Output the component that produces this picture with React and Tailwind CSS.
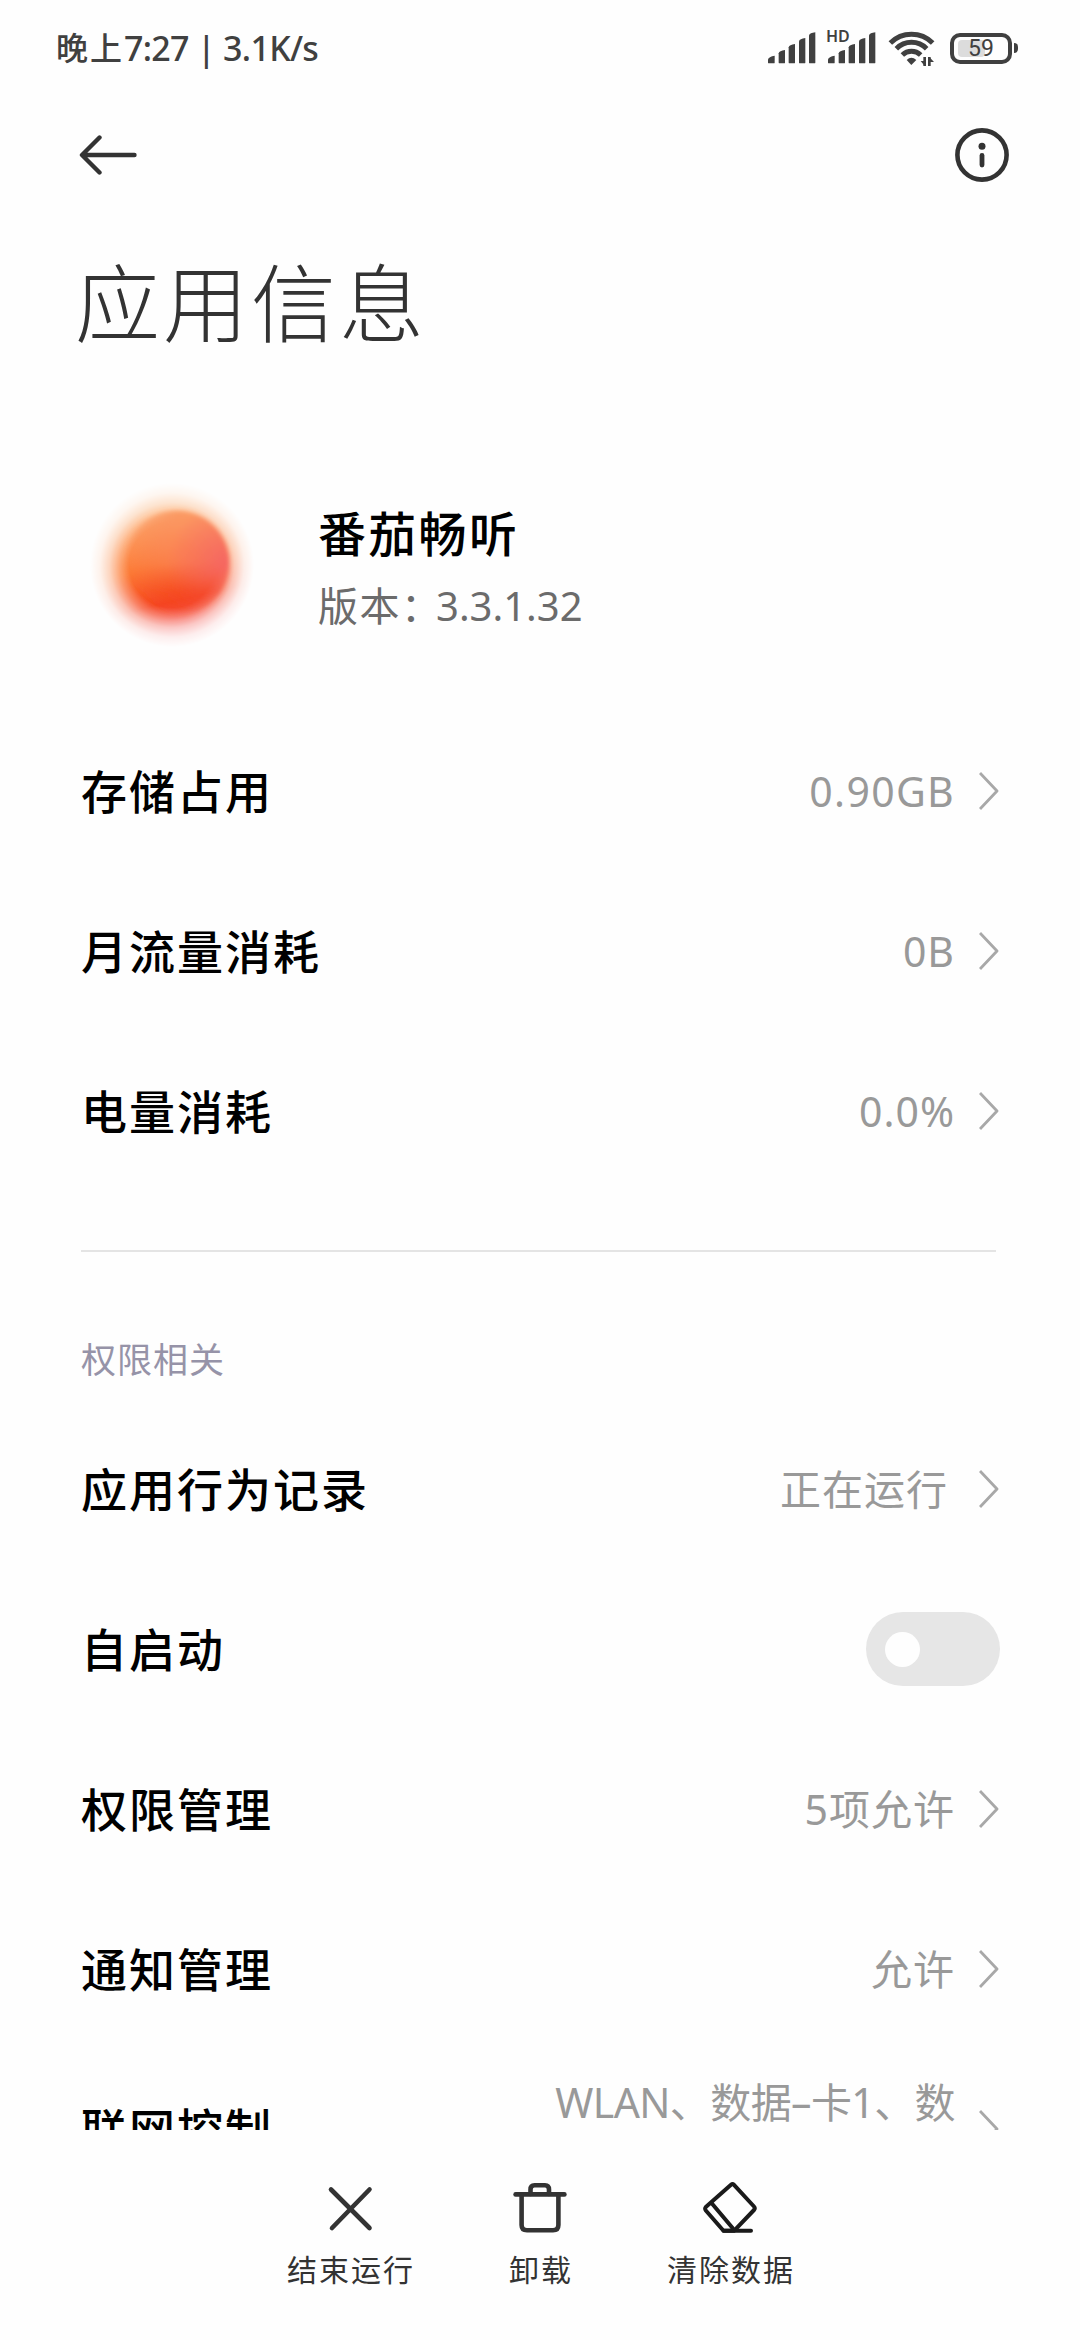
import React, { useState } from 'react';

// Barras de señal de la tarjeta SIM
const IconSignal = () => (
  <svg className="w-12 h-8" viewBox="0 0 144 96" fill="#404040">
    <path d="M0 92V82Q2 74 20 71V92Q20 94 17 94H3Q0 94 0 92Z" />
    <path d="M32 92V64Q34 56 51 54V92Q51 94 48 94H35Q32 94 32 92Z" />
    <path d="M62 92V46Q64 38 81 36V92Q81 94 78 94H65Q62 94 62 92Z" />
    <path d="M93 92V28Q95 20 112 18V92Q112 94 109 94H96Q93 94 93 92Z" />
    <path d="M123 92V10Q125 3 142 1V92Q142 94 139 94H126Q123 94 123 92Z" />
  </svg>
);

const IconWifi = () => (
  <svg className="w-[47px] h-[35px]" viewBox="442 60 141 105" fill="none" stroke="#404040">
    <path d="M449 96A90 90 0 0 1 576 96" strokeWidth="15" />
    <path d="M467 113A64 64 0 0 1 558 113" strokeWidth="15" />
    <path d="M485 132A40 40 0 0 1 540 132" strokeWidth="15" />
    <path d="M498 147Q512 134 527 147L512 162Z" fill="#404040" stroke="none" />
    <path d="M552 138V165M566 165V138" strokeWidth="8" />
    <path d="M540 150L552 165V150ZM566 138L580 153H566Z" fill="#404040" stroke="none" />
  </svg>
);

const IconBack = () => (
  <svg className="w-[58px] h-10" viewBox="0 0 58 40" fill="none" stroke="#333" strokeWidth="4.4" strokeLinecap="round" strokeLinejoin="round">
    <path d="M20.500 2.500L3 20L20.500 37.500M4 20H55.500" />
  </svg>
);

const IconInfo = () => (
  <svg className="w-[54px] h-[54px]" viewBox="0 0 54 54" fill="none" stroke="#333">
    <circle cx="27" cy="27" r="24.600" strokeWidth="4.600" />
    <circle cx="27" cy="18.200" r="3.500" fill="#333" stroke="none" />
    <path d="M27 27.500V37" strokeWidth="4.800" strokeLinecap="round" />
  </svg>
);

const IconChevron = () => (
  <svg className="w-5 h-[38px] shrink-0" viewBox="0 0 20 38" fill="none" stroke="#a8a8a8" strokeWidth="2.800" strokeLinejoin="round">
    <path d="M1 1L18 19L1 37" />
  </svg>
);

const IconClose = () => (
  <svg className="w-[52px] h-[52px]" viewBox="0 0 52 52" fill="none" stroke="#333" strokeWidth="4.600" strokeLinecap="round">
    <path d="M7 7.500L45.500 46M45.500 7.500L8 46" />
  </svg>
);

const IconTrash = () => (
  <svg className="w-[54px] h-[52px]" viewBox="0 0 54 52" fill="none" stroke="#333" strokeWidth="4.600" strokeLinecap="round" strokeLinejoin="round">
    <path d="M2.600 12.400H51.400" />
    <path d="M17.500 12V7.500Q17.500 3.200 21.500 3.200H32Q36 3.200 36 7.500V12" />
    <path d="M8.600 13V43Q8.600 48.300 14 48.300H40Q45.400 48.300 45.400 43V13" />
  </svg>
);

const IconEraser = () => (
  <svg className="w-[54px] h-[52px]" viewBox="0 0 54 52" fill="none" stroke="#1a1a1a" strokeWidth="4" strokeLinecap="round" strokeLinejoin="round">
    <path d="M28 2.800Q29.500 1.500 31 2.800L51 24.500Q52.500 26.200 51 28L31 48.800H20.500L2.800 28.500Q1.500 26.500 2.800 25Z" />
    <path d="M8.500 21L30 46.500M20.500 48.800H48" />
  </svg>
);

// Logo difuminado de la aplicación
const AppLogo = () => (
  <svg className="w-[176px] h-[176px]" viewBox="0 0 176 176">
    <defs>
      <radialGradient id="halo" cx="0.5" cy="0.5" r="0.5">
        <stop offset="0.52" stopColor="#fff" stopOpacity="1" />
        <stop offset="0.64" stopColor="#fff" stopOpacity="0.7" />
        <stop offset="0.76" stopColor="#fff" stopOpacity="0.33" />
        <stop offset="0.88" stopColor="#fff" stopOpacity="0.1" />
        <stop offset="1" stopColor="#fff" stopOpacity="0" />
      </radialGradient>
      <mask id="fade">
        <circle cx="85" cy="90" r="82" fill="url(#halo)" />
      </mask>
      <linearGradient id="glow" x1="0.35" y1="0" x2="0.58" y2="1">
        <stop offset="0.15" stopColor="#fdb074" />
        <stop offset="0.5" stopColor="#fc7a34" />
        <stop offset="0.72" stopColor="#f5441f" />
        <stop offset="0.9" stopColor="#f65a58" />
      </linearGradient>
      <linearGradient id="ball" x1="0.45" y1="0" x2="0.5" y2="1">
        <stop offset="0" stopColor="#fb9c66" />
        <stop offset="0.5" stopColor="#fb7f4a" />
        <stop offset="0.78" stopColor="#f5481f" />
        <stop offset="1" stopColor="#f4442a" />
      </linearGradient>
      <radialGradient id="pink" cx="1" cy="0.5" r="0.6">
        <stop offset="0" stopColor="#f4606a" stopOpacity="0.8" />
        <stop offset="1" stopColor="#f4606a" stopOpacity="0" />
      </radialGradient>
      {/* La esfera se funde con el halo hacia abajo a la izquierda */}
      <radialGradient id="melt" cx="0.7" cy="0.3" r="0.78">
        <stop offset="0.4" stopColor="#fff" stopOpacity="1" />
        <stop offset="0.95" stopColor="#fff" stopOpacity="0" />
      </radialGradient>
      <mask id="edge">
        <circle cx="90" cy="88" r="55" fill="url(#melt)" />
      </mask>
      <filter id="soft" x="-0.3" y="-0.3" width="1.6" height="1.6">
        <feGaussianBlur stdDeviation="2" />
      </filter>
    </defs>
    <circle cx="85" cy="90" r="82" fill="url(#glow)" mask="url(#fade)" />
    <g filter="url(#soft)">
      <g mask="url(#edge)">
        <circle cx="90" cy="88" r="52" fill="url(#ball)" />
        <circle cx="90" cy="88" r="52" fill="url(#pink)" />
      </g>
    </g>
  </svg>
);

const StatusBar = () => (
  <div className="h-24 pl-14 pr-[62px] flex items-center justify-between text-[#404040]">
    <div className="flex items-center text-[34px] leading-none font-medium">
      <span className="text-[32px] tracking-[2px]">晚上</span>
      <span className="tracking-[-0.7px]">7:27 | 3.1K/s</span>
    </div>
    <div className="flex items-center">
      <IconSignal />
      <div className="relative ml-3">
        <IconSignal />
        <span className="absolute -left-0.5 -top-[3px] bg-[#fefefe] pb-px pr-px text-[16px] leading-[14px] font-semibold">HD</span>
      </div>
      <div className="ml-3 flex">
        <IconWifi />
      </div>
      <div className="relative ml-[15px] flex h-[31px] w-[62px] items-center justify-center rounded-[10px] border-4 border-[#404040] text-[23px] leading-none font-normal font-[Roboto]">
        <div className="absolute left-1 top-[3px] h-[17px] w-[27px] rounded-sm bg-[#dcdcdc]" />
        <span className="relative">59</span>
      </div>
      <div className="ml-0.5 h-2.5 w-1 rounded-r-sm bg-[#404040]" />
    </div>
  </div>
);

const Row = ({ label, children, chevron = true }) => (
  <div className="h-40 pl-[81px] pr-[81px] flex items-center justify-between">
    <span className="text-[46px] leading-none tracking-[2px] font-medium text-black whitespace-nowrap">{label}</span>
    <div className="flex items-center text-[41px] leading-[54px] tracking-[1px] text-[#999]">
      {children}
      {chevron && (
        <div className="ml-6 flex">
          <IconChevron />
        </div>
      )}
    </div>
  </div>
);

const Toggle = () => {
  // Estado del interruptor de autoinicio
  const [isOn, setIsOn] = useState(false);

  return (
    <button
      onClick={() => setIsOn(!isOn)}
      className={`-mr-px h-[74px] w-[134px] rounded-full px-[19px] flex items-center ${isOn ? 'justify-end bg-blue-500' : 'justify-start bg-[#e6e6e6]'}`}
      aria-label="自启动"
    >
      <span className="h-[35px] w-[35px] rounded-full bg-[#fefefe]" />
    </button>
  );
};

const Action = ({ icon, label }) => (
  <button className="flex flex-col items-center">
    {icon}
    <span className="mt-4 pl-0.5 text-[30px] leading-[40px] tracking-[2px] text-[#333] whitespace-nowrap">{label}</span>
  </button>
);

const App = () => {
  return (
    <div className="h-[2340px] w-[1080px] overflow-hidden bg-[#fefefe] flex flex-col font-['Noto_Sans','Noto_Sans_CJK_SC',sans-serif]">
      <StatusBar />

      <div className="h-[118px] pl-[79px] pr-[71px] flex items-center justify-between">
        <IconBack />
        <IconInfo />
      </div>

      <h1 className="h-[180px] pl-[75px] pb-0.5 flex items-center text-[85px] leading-none tracking-[3px] font-light text-[#333]">应用信息</h1>

      <div className="h-[317px] pl-[87px] pt-[21px] flex items-center">
        <AppLogo />
        <div className="ml-[55px] pt-[13px] flex flex-col">
          <span className="text-[48px] leading-[64px] tracking-[2.3px] font-medium text-black">番茄畅听</span>
          <span className="mt-2 text-[40px] leading-[64px] text-[#6b6b6b]">
            <span className="tracking-[1.5px]">版本</span>
            <span className="tracking-[-5px]">：</span>3.3.1.32
          </span>
        </div>
      </div>

      <div className="h-[1419px] overflow-hidden">
        <Row label="存储占用">
          <span className="tracking-[1.3px]">0.90GB</span>
        </Row>
        <Row label="月流量消耗">0B</Row>
        <Row label="电量消耗">0.0%</Row>

        <div className="ml-[81px] mr-[84px] mt-[59px] h-0.5 bg-[#e4e4e4]" />
        <h2 className="h-[157px] pl-[81px] pt-[58px] box-border text-[35px] leading-[100px] tracking-[1px] text-[#9693a8]">权限相关</h2>

        <Row label="应用行为记录">
          <span className="mr-[7px]">正在运行</span>
        </Row>
        <Row label="自启动" chevron={false}>
          <Toggle />
        </Row>
        <Row label="权限管理">5项允许</Row>
        <Row label="通知管理">允许</Row>
        <Row label="联网控制">
          <span className="w-[410px] text-right tracking-[-0.6px]">WLAN、数据–卡1、数据–卡2</span>
        </Row>
      </div>

      <div className="flex-1 pt-[52px] flex items-start justify-center gap-[92px]">
        <Action icon={<IconClose />} label="结束运行" />
        <Action icon={<IconTrash />} label="卸载" />
        <Action icon={<IconEraser />} label="清除数据" />
      </div>
    </div>
  );
};

export default App;
